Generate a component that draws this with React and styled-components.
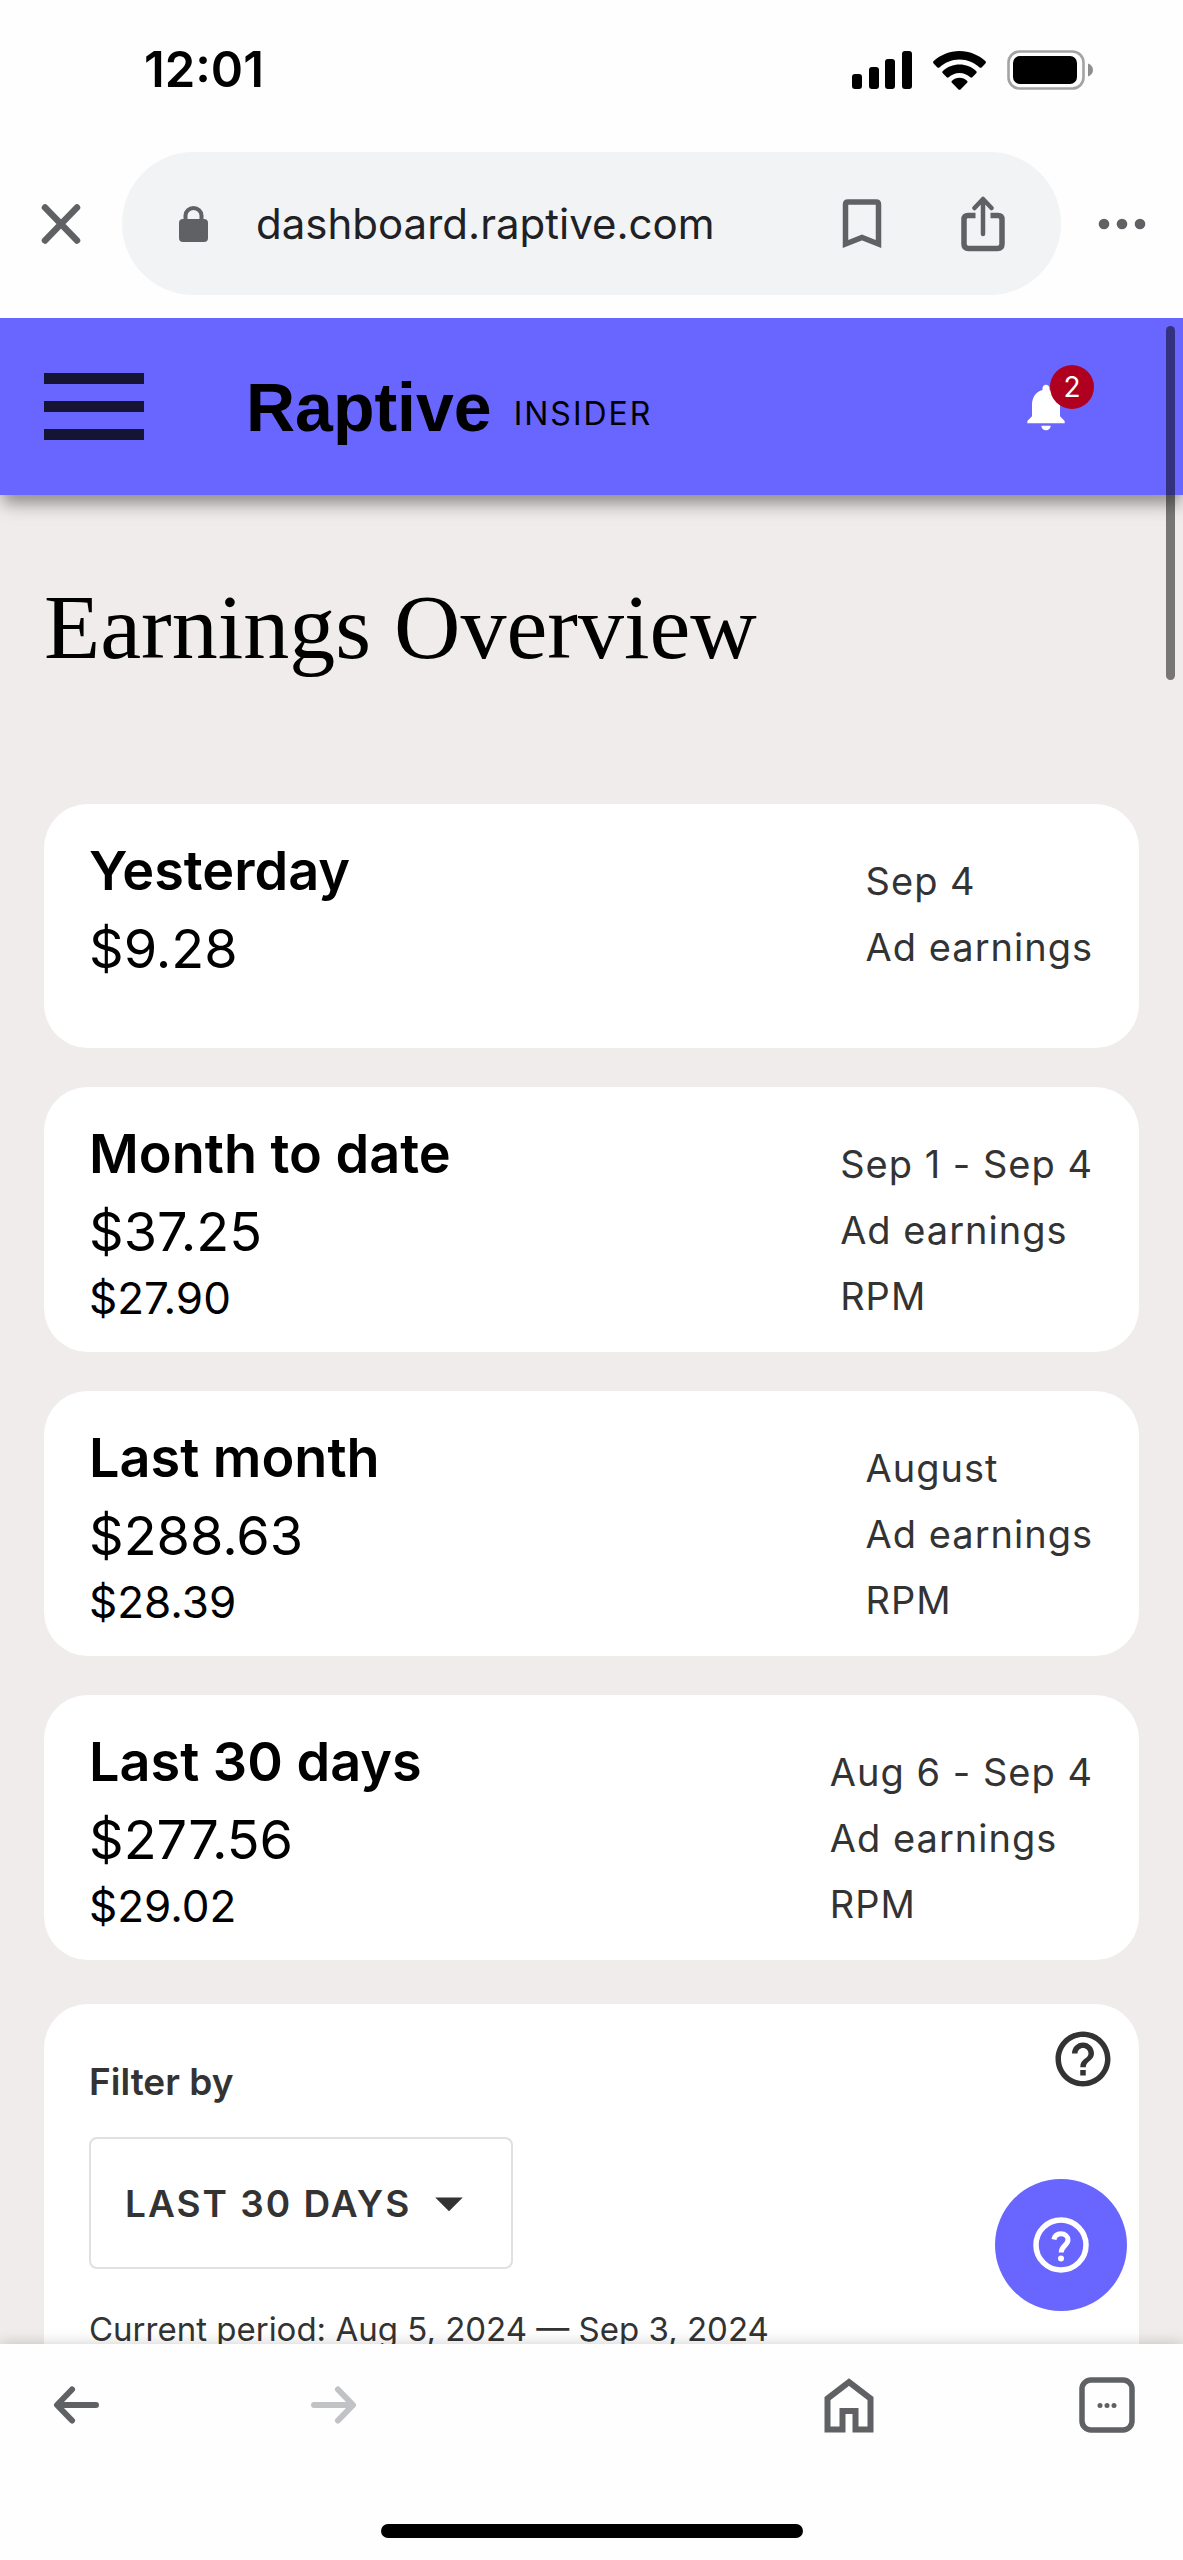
import { useState } from "react";
import styled, { createGlobalStyle } from "styled-components";
import { MdArrowDropDown, MdHelpOutline, MdNotifications } from "react-icons/md";

const GlobalStyle = createGlobalStyle`
  * {
    box-sizing: border-box;
  }

  body {
    margin: 0;
    font-family: Inter, "Liberation Sans", sans-serif;
    color: #000;
    background-color: #fefefe;
  }

  button, input, select {
    margin: 0;
    font-family: inherit;
    color: inherit;
  }

  svg {
    display: block;
  }
`;

const Screen = styled.div`
  display: flex;
  flex-direction: column;
  height: 100vh;
  overflow: hidden;
`;

const StatusBar = styled.div`
  display: flex;
  align-items: center;
  justify-content: space-between;
  height: 140px;
  padding: 0 90px 0 144px;
  flex-shrink: 0;
`;

const Clock = styled.time`
  font-size: 49px;
  line-height: 56px;
  font-weight: 600;
`;

const StatusIcons = styled.div`
  display: flex;
  align-items: center;
  gap: 21px;
`;

const BrowserBar = styled.div`
  display: flex;
  align-items: center;
  padding: 12px 0 23px;
  flex-shrink: 0;
`;

const IconButton = styled.button`
  display: flex;
  align-items: center;
  justify-content: center;
  width: ${({ $width }) => $width || 56}px;
  height: 56px;
  padding: 0;
  border: 0;
  background: none;
  color: #5f6165;
  cursor: pointer;
  flex-shrink: 0;

  &:disabled {
    color: #c1c2c5;
  }
`;

const AddressBar = styled.div`
  display: flex;
  align-items: center;
  flex: 1;
  min-width: 0;
  height: 143px;
  padding: 0 50px 0 57px;
  border-radius: 72px;
  background-color: #f1f3f5;
  color: #5f6165;
`;

const Address = styled.input`
  flex: 1;
  min-width: 0;
  margin: 0 24px 0 48px;
  padding: 0;
  border: 0;
  outline: 0;
  background: none;
  color: #202125;
  font-size: 42px;
  line-height: 56px;
`;

const AddressActions = styled.div`
  display: flex;
  gap: 65px;
`;

const Viewport = styled.div`
  position: relative;
  flex: 1;
  min-height: 0;
  overflow: hidden;
  background-color: #efeceb;
`;

const Header = styled.header`
  position: relative;
  display: flex;
  align-items: center;
  height: 177px;
  padding: 0 109px 0 44px;
  background-color: #6965ff;
  box-shadow: 0 11px 15px -3px rgba(0, 0, 0, 0.36),
    0 4px 30px rgba(0, 0, 0, 0.1);
`;

const MenuButton = styled.button`
  display: flex;
  flex-direction: column;
  gap: 17px;
  width: 100px;
  padding: 0;
  border: 0;
  background: none;
  cursor: pointer;

  span {
    height: 11px;
    background-color: #151433;
  }
`;

const Brand = styled.a`
  display: flex;
  align-items: flex-end;
  gap: 22px;
  margin-left: 102px;
  color: #000;
  text-decoration: none;
`;

const BrandName = styled.span`
  font-family: "Liberation Sans", Arial, sans-serif;
  font-size: 68px;
  line-height: 80px;
  font-weight: 700;
`;

const BrandTag = styled.span`
  font-size: 32px;
  line-height: 66px;
  letter-spacing: 2px;
`;

const Bell = styled.button`
  position: relative;
  margin-left: auto;
  padding: 0;
  border: 0;
  background: none;
  color: #fff;
  font-size: 56px;
  cursor: pointer;
`;

const Badge = styled.span`
  position: absolute;
  top: -14px;
  left: 32px;
  width: 44px;
  height: 44px;
  border-radius: 50%;
  background-color: #b00020;
  font-size: 28px;
  line-height: 44px;
  text-align: center;
`;

const Main = styled.main`
  padding: 80px 44px 0;
`;

const Title = styled.h1`
  margin: 0 0 125px;
  font-family: "Liberation Serif", "Times New Roman", serif;
  font-size: 92px;
  line-height: 104px;
  font-weight: 400;
`;

const Cards = styled.div`
  display: flex;
  flex-direction: column;
  gap: 39px;
`;

const Card = styled.section`
  display: flex;
  justify-content: space-between;
  min-height: 244px;
  padding: 28px 46px 23px 45px;
  border-radius: 44px;
  background-color: #fff;
`;

const CardTitle = styled.h2`
  margin: 0;
  font-size: 54px;
  line-height: 78px;
  font-weight: 600;
`;

const Amount = styled.div`
  font-size: ${({ $small }) => ($small ? 44 : 54)}px;
  line-height: ${({ $small }) => ($small ? 54 : 78)}px;
`;

const CardLabels = styled.div`
  padding-top: 16px;
  color: #333;
  font-size: 38px;
  line-height: 66px;
  letter-spacing: 1px;
`;

const FilterCard = styled.section`
  margin-top: 44px;
  padding: 22px 23px 60px 45px;
  border-radius: 44px 44px 0 0;
  background-color: #fff;
  color: #333;
`;

const FilterHead = styled.div`
  display: flex;
  align-items: flex-start;
  justify-content: space-between;
`;

const FilterLabel = styled.label`
  padding-top: 34px;
  font-size: 37px;
  line-height: 44px;
  font-weight: 600;
`;

const HelpButton = styled.button`
  padding: 0;
  border: 0;
  background: none;
  font-size: 66px;
  cursor: pointer;
`;

const SelectBox = styled.div`
  display: inline-grid;
  align-items: center;
  margin-top: 33px;

  > * {
    grid-area: 1 / 1;
  }

  svg {
    justify-self: end;
    margin-right: 31px;
    font-size: 66px;
    pointer-events: none;
  }
`;

const PeriodSelect = styled.select`
  width: 424px;
  height: 132px;
  padding: 0 80px 0 34px;
  border: 2px solid #e0e0e0;
  border-radius: 8px;
  background: none;
  appearance: none;
  font-size: 37px;
  font-weight: 600;
  letter-spacing: 2px;
  text-transform: uppercase;
`;

const Period = styled.p`
  margin: 38px 0 0;
  font-size: 33px;
  line-height: 44px;
`;

const ChatButton = styled.button`
  position: absolute;
  right: 56px;
  bottom: 33px;
  display: flex;
  align-items: center;
  justify-content: center;
  width: 132px;
  height: 132px;
  padding: 0;
  border: 0;
  border-radius: 50%;
  background-color: #6965ff;
  color: #fff;
  cursor: pointer;
`;

const ScrollThumb = styled.div`
  position: absolute;
  top: 8px;
  right: 8px;
  width: 9px;
  height: 354px;
  border-radius: 5px;
  background-color: rgba(0, 0, 0, 0.5);
`;

const BottomBar = styled.footer`
  position: relative;
  flex-shrink: 0;
  padding-bottom: 22px;
  background-color: #fefefe;
  box-shadow: 0 0 14px rgba(0, 0, 0, 0.2);
`;

const BottomNav = styled.nav`
  display: grid;
  grid-template-columns: repeat(5, 56px);
  justify-content: space-between;
  padding: 33px 48px 91px;
`;

const HomeButton = styled(IconButton)`
  grid-column: 4;
`;

const HomeIndicator = styled.div`
  width: 422px;
  height: 14px;
  margin: 0 auto;
  border-radius: 7px;
  background-color: #000;
`;

const summaries = [
  { title: "Yesterday", earnings: "$9.28", range: "Sep 4" },
  {
    title: "Month to date",
    earnings: "$37.25",
    rpm: "$27.90",
    range: "Sep 1 - Sep 4",
  },
  {
    title: "Last month",
    earnings: "$288.63",
    rpm: "$28.39",
    range: "August",
  },
  {
    title: "Last 30 days",
    earnings: "$277.56",
    rpm: "$29.02",
    range: "Aug 6 - Sep 4",
  },
];

const SignalIcon = () => (
  <svg width="60" height="38" viewBox="0 0 60 38">
    <rect x="0" y="23" width="10" height="15" rx="3" />
    <rect x="17" y="16" width="10" height="22" rx="3" />
    <rect x="33" y="8" width="10" height="30" rx="3" />
    <rect x="50" y="0" width="10" height="38" rx="3" />
  </svg>
);

const WifiIcon = () => (
  <svg width="53" height="39" viewBox="0 0 53 39">
    <path d="M26.5 0C16.6 0 7.6 3.8.7 10.1c-.8.7-.8 1.6-.1 2.3l3.8 4c.6.6 1.4.6 2 .1C11.7 11.7 18.7 8.6 26.5 8.6s14.8 3.1 20.1 7.9c.6.5 1.4.5 2-.1l3.8-4c.7-.7.7-1.6-.1-2.3C45.4 3.8 36.4 0 26.5 0z" />
    <path d="M26.5 13.6c-6.4 0-12.2 2.4-16.6 6.4-.8.7-.8 1.5-.1 2.2l3.9 4c.6.6 1.3.6 2 .1 2.9-2.6 6.6-4.2 10.8-4.2s7.9 1.6 10.8 4.2c.7.5 1.4.5 2-.1l3.9-4c.7-.7.7-1.5-.1-2.2-4.4-4-10.2-6.4-16.6-6.4z" />
    <path d="M26.5 26.8c-2.9 0-5.5 1.1-7.5 2.9-.7.6-.7 1.3-.1 2l6.6 6.7c.6.6 1.4.6 2 0l6.6-6.7c.6-.7.6-1.4-.1-2-2-1.8-4.6-2.9-7.5-2.9z" />
  </svg>
);

const BatteryIcon = () => (
  <svg width="86" height="40" viewBox="0 0 86 40">
    <rect
      x="1.5"
      y="1.5"
      width="75"
      height="37"
      rx="11"
      fill="none"
      stroke="#a3a3a3"
      strokeWidth="2.6"
    />
    <rect x="6" y="6" width="64" height="28" rx="7" />
    <path d="M81 13.5c3 1 5 3.5 5 6.5s-2 5.5-5 6.5z" fill="#8f8f8f" />
  </svg>
);

const CloseIcon = () => (
  <svg width="40" height="40" viewBox="0 0 40 40">
    <path
      d="M4 3.5l32 33M36 3.5l-32 33"
      stroke="currentColor"
      strokeWidth="6.5"
      strokeLinecap="round"
    />
  </svg>
);

const LockIcon = () => (
  <svg width="29" height="36" viewBox="0 0 29 36">
    <rect y="13" width="29" height="23" rx="4" fill="currentColor" />
    <path
      d="M6.5 15V9.5a8 7.5 0 0 1 16 0V15"
      fill="none"
      stroke="currentColor"
      strokeWidth="4"
    />
  </svg>
);

const BookmarkIcon = () => (
  <svg width="40" height="50" viewBox="0 0 40 50">
    <path
      d="M3.5 45V5.5q0-2.5 2.5-2.5h28q2.5 0 2.5 2.5V45L20 38.5z"
      fill="none"
      stroke="currentColor"
      strokeWidth="5.5"
    />
  </svg>
);

const ShareIcon = () => (
  <svg width="44" height="56" viewBox="0 0 44 56" fill="none">
    <path
      d="M14.5 19.5H7q-4 0-4 4V48q0 4.5 4.5 4.5h29q4.5 0 4.5-4.5V23.5q0-4-4-4h-7.5"
      stroke="currentColor"
      strokeWidth="5.5"
    />
    <path
      d="M22 38V4M13.5 12L22 3l8.5 9"
      stroke="currentColor"
      strokeWidth="4.5"
      strokeLinecap="round"
      strokeLinejoin="round"
    />
  </svg>
);

const MoreIcon = () => (
  <svg width="48" height="12" viewBox="0 0 48 12" fill="currentColor">
    <circle cx="6" cy="6" r="5.3" />
    <circle cx="24" cy="6" r="5.3" />
    <circle cx="42" cy="6" r="5.3" />
  </svg>
);

const ArrowIcon = ({ forward }) => (
  <svg width="46" height="38" viewBox="0 0 46 38" fill="none">
    <path
      d={
        forward
          ? "M3 19h38M27 3.5L42 19 27 34.5"
          : "M43 19H5M19 3.5L4 19l15 15.5"
      }
      stroke="currentColor"
      strokeWidth="6"
      strokeLinecap="round"
      strokeLinejoin="round"
    />
  </svg>
);

const HomeIcon = () => (
  <svg width="50" height="56" viewBox="0 0 50 56">
    <path
      d="M3.5 52.5V21.5L25 5l21.5 16.5v31H31.5V34h-13v18.5z"
      fill="none"
      stroke="currentColor"
      strokeWidth="6"
    />
  </svg>
);

const TabsIcon = () => (
  <svg width="56" height="56" viewBox="0 0 56 56">
    <rect
      x="3"
      y="3"
      width="50"
      height="50"
      rx="9"
      fill="none"
      stroke="currentColor"
      strokeWidth="5.5"
    />
    <circle cx="21" cy="28.5" r="2.5" fill="currentColor" />
    <circle cx="28" cy="28.5" r="2.5" fill="currentColor" />
    <circle cx="35" cy="28.5" r="2.5" fill="currentColor" />
  </svg>
);

const ChatHelpIcon = () => (
  <svg width="56" height="56" viewBox="0 0 56 56" fill="none">
    <circle cx="28" cy="28" r="25" stroke="currentColor" strokeWidth="5.5" />
    <path
      d="M21 22.5c.6-3.6 3.4-5.7 7-5.7 4 0 7 2.6 7 6.2 0 5-6.8 6-6.8 12.5"
      stroke="currentColor"
      strokeWidth="5"
    />
    <circle cx="28" cy="41.5" r="3" fill="currentColor" />
  </svg>
);

const SummaryCard = ({ summary }) => {
  return (
    <Card>
      <div>
        <CardTitle>{summary.title}</CardTitle>
        <Amount>{summary.earnings}</Amount>
        {summary.rpm && <Amount $small>{summary.rpm}</Amount>}
      </div>
      <CardLabels>
        <div>{summary.range}</div>
        <div>Ad earnings</div>
        {summary.rpm && <div>RPM</div>}
      </CardLabels>
    </Card>
  );
};

const App = () => {
  const [period, setPeriod] = useState("30");

  return (
    <Screen>
      <GlobalStyle />
      <StatusBar>
        <Clock>12:01</Clock>
        <StatusIcons>
          <SignalIcon />
          <WifiIcon />
          <BatteryIcon />
        </StatusIcons>
      </StatusBar>
      <BrowserBar>
        <IconButton $width={122} aria-label="Close">
          <CloseIcon />
        </IconButton>
        <AddressBar>
          <LockIcon />
          <Address aria-label="Address" defaultValue="dashboard.raptive.com" />
          <AddressActions>
            <IconButton aria-label="Bookmark">
              <BookmarkIcon />
            </IconButton>
            <IconButton aria-label="Share">
              <ShareIcon />
            </IconButton>
          </AddressActions>
        </AddressBar>
        <IconButton $width={122} aria-label="More">
          <MoreIcon />
        </IconButton>
      </BrowserBar>

      <Viewport>
        <Header>
          <MenuButton aria-label="Menu">
            <span />
            <span />
            <span />
          </MenuButton>
          <Brand href="#">
            <BrandName>Raptive</BrandName>
            <BrandTag>INSIDER</BrandTag>
          </Brand>
          <Bell aria-label="Notifications">
            <MdNotifications />
            <Badge>2</Badge>
          </Bell>
        </Header>
        <Main>
          <Title>Earnings Overview</Title>
          <Cards>
            {summaries.map((summary) => (
              <SummaryCard key={summary.title} summary={summary} />
            ))}
          </Cards>
          <FilterCard>
            <FilterHead>
              <FilterLabel htmlFor="period">Filter by</FilterLabel>
              <HelpButton aria-label="Help">
                <MdHelpOutline />
              </HelpButton>
            </FilterHead>
            <SelectBox>
              <PeriodSelect
                id="period"
                value={period}
                onChange={(e) => setPeriod(e.target.value)}
              >
                <option value="7">Last 7 days</option>
                <option value="30">Last 30 days</option>
              </PeriodSelect>
              <MdArrowDropDown />
            </SelectBox>
            <Period>Current period: Aug 5, 2024 — Sep 3, 2024</Period>
          </FilterCard>
        </Main>
        <ChatButton aria-label="Support">
          <ChatHelpIcon />
        </ChatButton>
        <ScrollThumb />
      </Viewport>

      <BottomBar>
        <BottomNav>
          <IconButton aria-label="Back">
            <ArrowIcon />
          </IconButton>
          <IconButton aria-label="Forward" disabled>
            <ArrowIcon forward />
          </IconButton>
          <HomeButton aria-label="Home">
            <HomeIcon />
          </HomeButton>
          <IconButton aria-label="Tabs">
            <TabsIcon />
          </IconButton>
        </BottomNav>
        <HomeIndicator />
      </BottomBar>
    </Screen>
  );
};

export default App;
